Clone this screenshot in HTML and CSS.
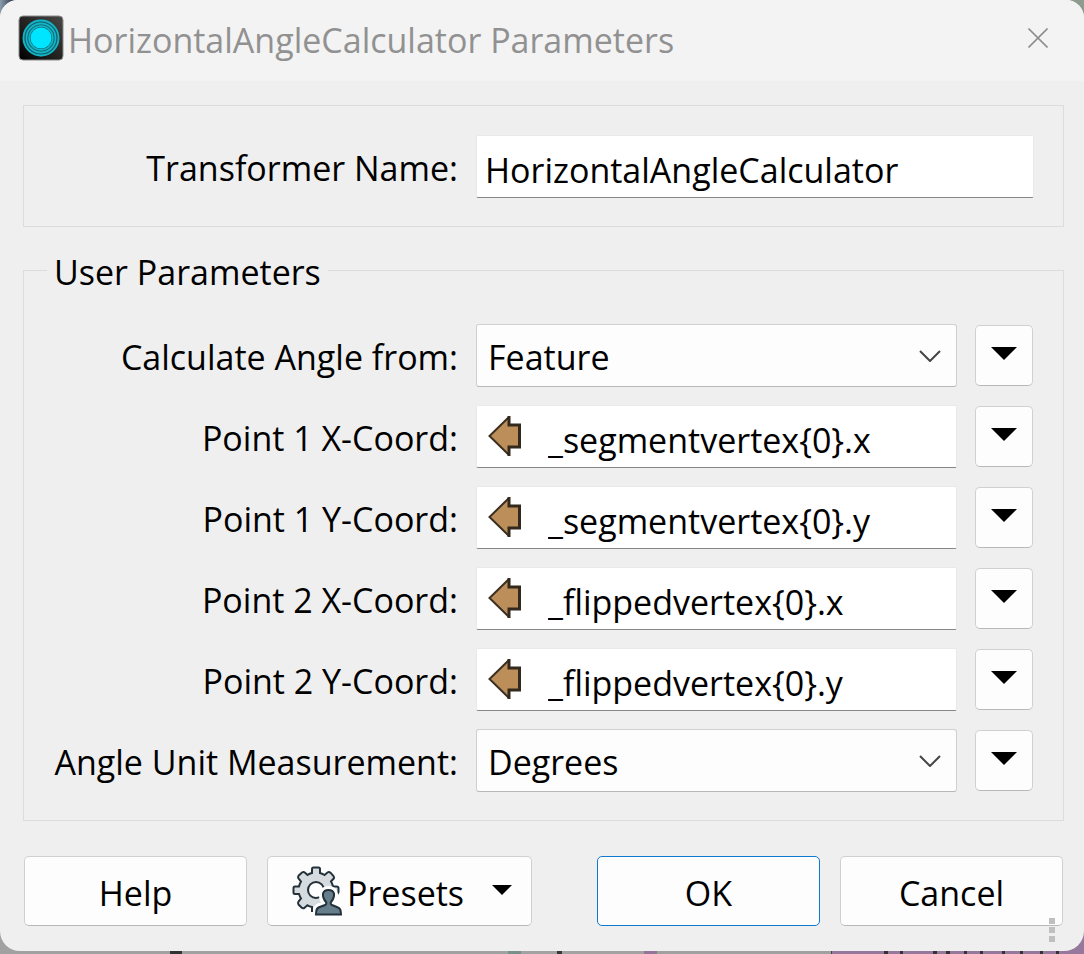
FILE: index.html
```html
<!DOCTYPE html>
<html lang="en">
<head>
<meta charset="utf-8">
<meta name="viewport" content="width=device-width, initial-scale=1">
<title>HorizontalAngleCalculator Parameters</title>
<link rel="stylesheet" href="styles.css">
</head>
<body>
<svg class="symbols" aria-hidden="true">
  <symbol id="attribute" viewBox="0 0 36 44">
    <path d="M2.500 22 22 2.500V10.500H33V33H22V41.500Z" fill="#bc8f5a"/>
    <path d="M22 3 2.500 22 22 41" fill="none" stroke="#3a2f20" stroke-width="2"/>
    <path d="M22 2V11H32.500V33H22V42" fill="none" stroke="#33291c" stroke-width="3"/>
  </symbol>
  <symbol id="triangle" viewBox="0 0 26 13"><path d="M0 0H26L13 13Z"/></symbol>
</svg>
<main class="dialog">
  <header class="titlebar">
    <svg class="app-icon" viewBox="0 0 46 46" aria-hidden="true">
      <defs>
        <linearGradient id="tile" x1="0" y1="1" x2="1" y2="0"><stop offset="0" stop-color="#000"/><stop offset="1" stop-color="#4a4845"/></linearGradient>
      </defs>
      <rect x="1" y="1" width="44" height="44" rx="4" fill="url(#tile)" stroke="#8b8b8b"/>
      <circle cx="23" cy="23" r="18.500" fill="#0e5e68"/>
      <g fill="none" stroke="#14b4c6" stroke-width="1.800"><circle cx="23" cy="23" r="17.500"/><circle cx="23" cy="23" r="14.500"/><circle cx="23" cy="23" r="11.800"/></g>
      <circle cx="23" cy="23" r="10.500" fill="#00e5ff"/>
    </svg>
    <h1 class="title">HorizontalAngleCalculator Parameters</h1>
    <button class="close" type="button" aria-label="Close">
      <svg viewBox="0 0 20 20" aria-hidden="true"><path d="M0.500 0.500 19.500 19.500M19.500 0.500 0.500 19.500" fill="none" stroke="#8f8f8f" stroke-width="1.600"/></svg>
    </button>
  </header>
  <form class="content">
    <div class="group name-group">
      <label class="label" for="name">Transformer Name:</label>
      <input class="field name-field" id="name" type="text" value="HorizontalAngleCalculator" spellcheck="false">
    </div>
    <fieldset class="group">
      <legend class="legend">User Parameters</legend>
      <div class="rows">
        <label class="label" for="from">Calculate Angle from:</label>
        <div class="select-wrap">
          <select class="select" id="from"><option>Feature</option><option>Values</option></select>
          <svg class="chevron" viewBox="0 0 22 12" aria-hidden="true"><path d="M1 1 11 11 21 1"/></svg>
        </div>
        <button class="button menu" type="button" aria-label="Angle source options"><svg class="triangle" aria-hidden="true"><use href="#triangle"/></svg></button>

        <label class="label" for="x1">Point 1 X-Coord:</label>
        <div class="field attr"><svg class="attr-icon" aria-hidden="true"><use href="#attribute"/></svg><input class="attr-input" id="x1" type="text" value="_segmentvertex{0}.x" spellcheck="false"></div>
        <button class="button menu" type="button" aria-label="Point 1 X options"><svg class="triangle" aria-hidden="true"><use href="#triangle"/></svg></button>

        <label class="label" for="y1">Point 1 Y-Coord:</label>
        <div class="field attr"><svg class="attr-icon" aria-hidden="true"><use href="#attribute"/></svg><input class="attr-input" id="y1" type="text" value="_segmentvertex{0}.y" spellcheck="false"></div>
        <button class="button menu" type="button" aria-label="Point 1 Y options"><svg class="triangle" aria-hidden="true"><use href="#triangle"/></svg></button>

        <label class="label" for="x2">Point 2 X-Coord:</label>
        <div class="field attr"><svg class="attr-icon" aria-hidden="true"><use href="#attribute"/></svg><input class="attr-input" id="x2" type="text" value="_flippedvertex{0}.x" spellcheck="false"></div>
        <button class="button menu" type="button" aria-label="Point 2 X options"><svg class="triangle" aria-hidden="true"><use href="#triangle"/></svg></button>

        <label class="label" for="y2">Point 2 Y-Coord:</label>
        <div class="field attr"><svg class="attr-icon" aria-hidden="true"><use href="#attribute"/></svg><input class="attr-input" id="y2" type="text" value="_flippedvertex{0}.y" spellcheck="false"></div>
        <button class="button menu" type="button" aria-label="Point 2 Y options"><svg class="triangle" aria-hidden="true"><use href="#triangle"/></svg></button>

        <label class="label" for="unit">Angle Unit Measurement:</label>
        <div class="select-wrap">
          <select class="select" id="unit"><option>Degrees</option><option>Radians</option></select>
          <svg class="chevron" viewBox="0 0 22 12" aria-hidden="true"><path d="M1 1 11 11 21 1"/></svg>
        </div>
        <button class="button menu" type="button" aria-label="Angle unit options"><svg class="triangle" aria-hidden="true"><use href="#triangle"/></svg></button>
      </div>
    </fieldset>
    <div class="actions">
      <button class="button action" type="button">Help</button>
      <button class="button presets" type="button">
        <svg class="gear" viewBox="0 0 50 50" aria-hidden="true">
          <path d="M20 7V3Q20 1.500 21.500 1.500H26.500Q28 1.500 28 3V7Q30 7.500 32.500 9L35.500 6.500Q37 5.500 38.500 6.700L41.500 10Q42.500 11.500 41.500 12.800L39 15.500Q40.500 18 41 20.500H44.500Q46.500 20.500 46.500 22V26Q46.500 28 45 28.500L32 36 20 46V41Q17.500 40.500 15.500 39.300L12.500 41.800Q11 42.800 9.500 41.500L6.500 38.500Q5.500 37 6.500 35.500L9 32.500Q7.800 30.500 7 28H3Q1.500 28 1.500 26.500V22Q1.500 20.500 3 20.500H7Q7.500 18 9 15.500L6.500 12.500Q5.500 11 6.500 9.800L10 6.500Q11.500 5.500 12.800 6.500L15.500 9Q17.500 7.500 20 7Z" fill="#d5dbde"/>
          <path d="M20 46V41Q17.500 40.500 15.500 39.300L12.500 41.800Q11 42.800 9.500 41.500L6.500 38.500Q5.500 37 6.500 35.500L9 32.500Q7.800 30.500 7 28H3Q1.500 28 1.500 26.500V22Q1.500 20.500 3 20.500H7Q7.500 18 9 15.500L6.500 12.500Q5.500 11 6.500 9.800L10 6.500Q11.500 5.500 12.800 6.500L15.500 9Q17.500 7.500 20 7V3Q20 1.500 21.500 1.500H26.500Q28 1.500 28 3V7Q30 7.500 32.500 9L35.500 6.500Q37 5.500 38.500 6.700L41.500 10Q42.500 11.500 41.500 12.800L39 15.500Q40.500 18 41 20.500H44.500Q46.500 20.500 46.500 22V26L45.500 28" fill="none" stroke="#22313a" stroke-width="2"/>
          <circle cx="24" cy="24" r="8" fill="#fdfdfd" stroke="#22313a" stroke-width="2"/>
          <path d="M23.500 49V43Q24 41 26 40L32 37.500Q29 33 29.500 28Q30.500 22.500 36.500 22.500T43.500 28Q44 33 40.500 37.500L46.500 40Q48.500 41 49 49Z" fill="#fdfdfd" stroke="#fdfdfd" stroke-width="5"/>
          <path d="M24 48.500Q24 42.500 26.500 41.500L33 39Q35 38 34 36Q30.500 32 31 27.500Q32 24 36.500 24T42 27.500Q42.500 32 39 36Q38 38 40 39L46 41.500Q49 42.500 49 48.500Z" fill="#667d8b" stroke="#22313a" stroke-width="2"/>
        </svg>
        <span>Presets</span>
        <svg class="small-triangle" aria-hidden="true"><use href="#triangle"/></svg>
      </button>
      <button class="button action ok" type="submit">OK</button>
      <button class="button action" type="button">Cancel</button>
    </div>
  </form>
  <div class="grip" aria-hidden="true"><i class="dot"></i><i class="dot"></i><i class="dot"></i></div>
</main>
</body>
</html>
```
FILE: styles.css
```css
* { box-sizing: border-box; }
body {
  margin: 0;
  min-height: 100vh;
  padding-bottom: 3px;
  font-family: "Open Sans", "Noto Sans", sans-serif;
  font-size: 34px;
  line-height: 48px;
  color: #000;
  background:
    linear-gradient(90deg, #8a9bac, #1d2836 16px, transparent 16px) top left / 100% 16px no-repeat,
    linear-gradient(#8d9c8c, #8d9c8c) top right / 16px 16px no-repeat,
    linear-gradient(90deg, transparent 170px, #333 170px 182px, transparent 182px 884px, #333 884px 888px, transparent 888px 900px, #333 900px 903px, transparent 903px 933px, #333 933px 937px, transparent 937px 946px, #333 946px 950px, transparent 950px 964px, #333 964px 967px, transparent 967px 980px, #333 980px 983px, transparent 983px 1002px, #333 1002px 1005px, transparent 1005px 1020px, #333 1020px 1023px, transparent 1023px 1040px, #333 1040px 1043px, transparent 1043px 1056px, #333 1056px 1059px, transparent 1059px) bottom left / 100% 3px no-repeat,
    linear-gradient(90deg, #a0a1a0 508px, #78918d 508px 521px, #a3a1a2 521px 557px, #3a3538 557px 562px, #a3a1a2 562px 644px, #93759a 644px 657px, #a0a0a0 657px 831px, #444 831px 832px, #95789b 832px);
}
button, input, select { font: inherit; color: inherit; }
.symbols { position: absolute; width: 0; height: 0; }
.dialog {
  position: relative;
  background: #efefef;
  border-radius: 18px 18px 20px 20px;
  overflow: hidden;
}
.titlebar {
  display: flex;
  align-items: center;
  height: 81px;
  padding: 0 24px 5px 18px;
  background: #f3f3f3;
  color: #919191;
}
.app-icon { width: 46px; height: 46px; flex: none; }
.title { flex: 1; margin: 0 0 0 4px; padding-top: 4px; font: inherit; white-space: nowrap; }
.close {
  display: grid;
  place-items: center;
  width: 44px;
  height: 44px;
  padding: 0;
  border: 0;
  background: none;
}
.close svg { width: 20px; height: 20px; }
.content { padding: 24px 20px 25px 23px; }
.group { margin: 0; min-width: 0; border: 1px solid #dcdcdc; }
.name-group {
  display: grid;
  grid-template-columns: 411px minmax(0, 1fr);
  gap: 18px;
  align-items: center;
  padding: 29px 29px 28px 23px;
  margin-bottom: 19px;
}
fieldset.group { padding: 30px 30px 28px 23px; }
.legend { padding: 4px 7px 0; line-height: 44px; }
.rows {
  display: grid;
  grid-template-columns: 411px minmax(0, 1fr) 58px;
  gap: 18px;
  align-items: center;
}
.label { text-align: right; white-space: nowrap; padding-top: 2px; }
.field {
  width: 100%;
  height: 63px;
  border: 1px solid #e9e9e9;
  border-bottom-color: #868686;
  border-radius: 2px;
  background: #fff;
}
.name-field { padding: 6px 8px 0; }
.attr { display: flex; align-items: center; padding-left: 10px; }
.attr-icon { width: 36px; height: 44px; margin-bottom: 2px; flex: none; }
.attr-input {
  flex: 1;
  min-width: 0;
  height: 61px;
  margin-left: 25px;
  padding: 6px 0 0;
  border: 0;
  background: none;
}
.select-wrap { display: grid; align-items: center; }
.select-wrap > * { grid-area: 1 / 1; }
.select {
  appearance: none;
  width: 100%;
  height: 63px;
  padding: 2px 48px 0 11px;
  border: 1px solid #d0d0d0;
  border-bottom-color: #b8b8b8;
  border-radius: 3px;
  background: #fdfdfd;
}
.chevron {
  justify-self: end;
  width: 22px;
  height: 12px;
  margin-right: 16px;
  fill: none;
  stroke: #454545;
  stroke-width: 2;
  pointer-events: none;
}
.button {
  padding: 0;
  border: 1px solid #d0d0d0;
  border-bottom-color: #b8b8b8;
  border-radius: 5px;
  background: #fdfdfd;
}
.menu { display: grid; place-items: center; width: 58px; height: 61px; padding-bottom: 4px; }
.triangle { width: 26px; height: 13px; }
.actions {
  display: grid;
  grid-template-columns: 223fr 265fr 25px 223fr 223fr;
  column-gap: 20px;
  padding: 35px 1px 0;
}
.action, .presets { height: 70px; padding-top: 4px; }
.presets { display: flex; align-items: center; padding: 4px 19px 0 24px; }
.gear { width: 50px; height: 50px; margin: 0 5px 4px 0; }
.small-triangle { width: 20px; height: 10px; margin: 0 0 6px auto; }
.ok { grid-column: 4; border-color: #0f78cf; }
.grip {
  position: absolute;
  right: 29px;
  bottom: 9px;
  display: grid;
  gap: 3px;
}
.dot { width: 6px; height: 6px; background: #bfbfbf; }
```
